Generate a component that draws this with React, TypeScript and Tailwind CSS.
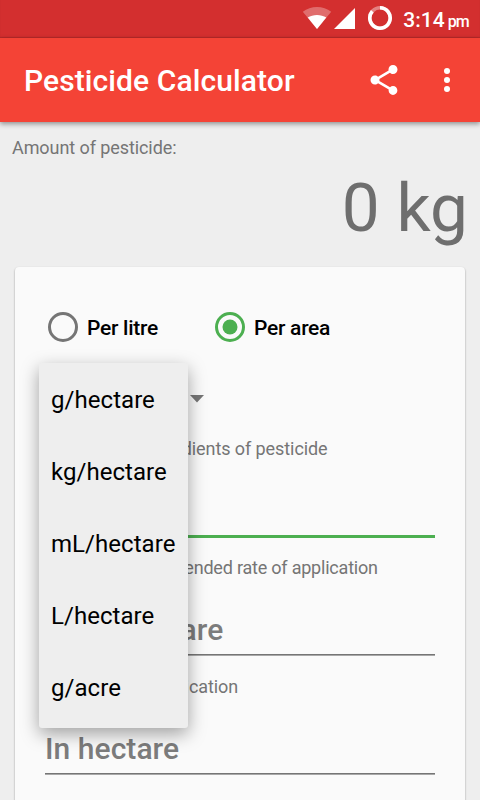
const UNITS = ["g/hectare", "kg/hectare", "mL/hectare", "L/hectare", "g/acre"];

const FIELDS = [
  { label: "Enter active ingredients of pesticide", hint: "", active: true, tracking: "tracking-[-0.08px]" },
  { label: "Enter the recommended rate of application", hint: "In kg/hectare", active: false, tracking: "tracking-[-0.21px]" },
  { label: "Enter area of application", hint: "In hectare", active: false, tracking: "tracking-[-0.08px]" },
];

function StatusBar() {
  return (
    <div className="flex h-[38px] items-center justify-end bg-[#d32f2f] text-white shadow-[inset_0_-1px_1px_rgba(0,0,0,0.14)]">
      <svg width="30" height="23" viewBox="0 0 30 23" className="-mt-px">
        <path d="M15 22 0.8 4.7C4.8 1.6 9.7 0 15 0s10.2 1.6 14.2 4.7z" fill="#fff" fillOpacity="0.3" />
        <path d="M15 22 5.7 10.6C8.3 8.9 11.6 8 15 8s6.7.9 9.3 2.6z" fill="#fff" />
      </svg>
      <svg width="22" height="22" viewBox="0 0 22 22" className="ml-px">
        <path d="M22 0v21H1z" fill="#fff" />
      </svg>
      <svg width="26" height="26" viewBox="0 0 26 26" className="-mt-[2px] ml-3">
        <circle cx="13" cy="13" r="10.2" fill="none" stroke="#fff" strokeOpacity="0.4" strokeWidth="3.6" />
        <path d="M13 2.8A10.2 10.2 0 1 1 5.3 6.3" fill="none" stroke="#fff" strokeWidth="3.6" />
      </svg>
      <div className="ml-[10px] mr-[11px] mt-[3px] flex items-baseline font-medium leading-none">
        <span className="text-[21px]">3:14</span>
        <span className="ml-[3px] text-[16px] tracking-[-0.8px]">pm</span>
      </div>
    </div>
  );
}

function AppBar() {
  return (
    <header className="relative z-10 flex h-[84px] items-center bg-[#f44336] pl-6 text-white shadow-[0_2px_5px_rgba(0,0,0,0.4)]">
      <h1 className="flex-1 whitespace-nowrap pt-0.5 text-[30px] font-medium leading-none tracking-[0.1px]">
        Pesticide Calculator
      </h1>
      <button type="button" aria-label="Share">
        <svg width="36" height="36" viewBox="0 0 24 24" fill="#fff">
          <path d="M18 16.08c-.76 0-1.44.3-1.96.77L8.91 12.7c.05-.23.09-.46.09-.7s-.04-.47-.09-.7l7.05-4.11c.54.5 1.25.81 2.04.81 1.66 0 3-1.34 3-3s-1.34-3-3-3-3 1.34-3 3c0 .24.04.47.09.7L8.04 9.81C7.5 9.31 6.79 9 6 9c-1.66 0-3 1.34-3 3s1.34 3 3 3c.79 0 1.5-.31 2.04-.81l7.12 4.16c-.05.21-.08.43-.08.65 0 1.61 1.31 2.92 2.92 2.92 1.61 0 2.92-1.31 2.92-2.92s-1.31-2.92-2.92-2.92z" />
        </svg>
      </button>
      <button type="button" aria-label="More options" className="ml-[27px] mr-[15px]">
        <svg width="36" height="36" viewBox="0 0 24 24" fill="#fff">
          <circle cx="12" cy="6" r="2" />
          <circle cx="12" cy="12" r="2" />
          <circle cx="12" cy="18" r="2" />
        </svg>
      </button>
    </header>
  );
}

function Radio({ label, checked }: { label: string; checked: boolean }) {
  return (
    <label className="flex w-[167px] items-center">
      <svg width="30" height="30" viewBox="0 0 30 30">
        <circle cx="15" cy="15" r="13.5" fill="none" stroke={checked ? "#4caf50" : "#757575"} strokeWidth="3" />
        {checked && <circle cx="15" cy="15" r="7.5" fill="#4caf50" />}
      </svg>
      <span className="ml-[9px] pt-[2px] text-[21px] font-medium leading-none tracking-[-0.27px] text-black">
        {label}
      </span>
    </label>
  );
}

function Field({ label, hint, active, tracking }: (typeof FIELDS)[number]) {
  return (
    <div className="h-[119px] whitespace-nowrap">
      <div className={`h-6 text-[18px] leading-6 text-[#757575] ${tracking}`}>{label}</div>
      <div className="mt-[33px] h-[41px] pt-px text-[30px] font-medium leading-8 tracking-[0.05px] text-[#7c7c7c]">
        {hint}
      </div>
      {active ? (
        <div className="h-[3px] bg-[#4caf50]" />
      ) : (
        <div className="h-[2px] border-t border-[#757575] bg-[#a8a8a8]" />
      )}
    </div>
  );
}

function UnitMenu() {
  return (
    <ul className="absolute left-[39px] top-[363px] z-20 h-[365px] w-[149px] rounded-[3px] bg-[#eeeeee] pt-px shadow-[0_6px_18px_rgba(0,0,0,0.36)]">
      {UNITS.map((unit) => (
        <li
          key={unit}
          className="flex h-[72px] items-center whitespace-nowrap pl-3 text-[24px] leading-none tracking-[0.05px] text-black"
        >
          {unit}
        </li>
      ))}
    </ul>
  );
}

export default function App() {
  return (
    <div className="relative h-[800px] w-[480px] overflow-hidden bg-[#eeeeee] font-['Roboto',sans-serif]">
      <StatusBar />
      <AppBar />
      <section className="h-[145px] px-3 pt-[14px] text-[#6e6e6e]">
        <p className="text-[18px] leading-6 tracking-[-0.08px] text-[#757575]">Amount of pesticide:</p>
        <p className="text-right text-[67.5px] leading-[96px]">0 kg</p>
      </section>
      <main className="mx-[15px] h-[560px] rounded-[4px] bg-[#fafafa] px-[30px] pt-[45px] shadow-[0_1px_2px_rgba(0,0,0,0.4)]">
        <div className="flex pl-[3px]">
          <Radio label="Per litre" checked={false} />
          <Radio label="Per area" checked />
        </div>
        <div className="flex h-[95px] items-center pt-[18px]">
          <svg width="14" height="8" viewBox="0 0 14 8" className="ml-[145px]">
            <path d="M0 0h14L7 7.5z" fill="#757575" />
          </svg>
        </div>
        {FIELDS.map((field) => (
          <Field key={field.label} {...field} />
        ))}
      </main>
      <UnitMenu />
    </div>
  );
}
